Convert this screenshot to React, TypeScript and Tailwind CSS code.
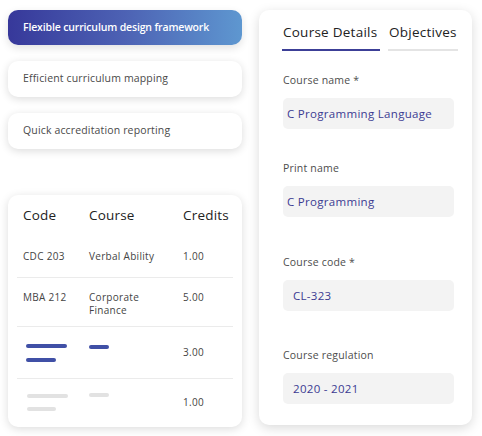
const font = { fontFamily: '"Open Sans", "Noto Sans", sans-serif' };

const SideCard = ({ label, active }: { label: string; active?: boolean }) => (
  <div
    className={
      active
        ? 'flex h-[35px] items-center rounded-[10px] bg-gradient-to-r from-[#37389a] via-[#4d62b4] to-[#5e97d0] pl-[15px] text-[10.5px] font-semibold tracking-[-0.15px] text-white shadow-[0_3px_8px_rgba(0,0,0,0.12)]'
        : 'flex h-[36px] items-center rounded-[10px] bg-white pl-[15px] text-[10.5px] tracking-[0.15px] text-[#4a4a4a] shadow-[0_2px_8px_rgba(0,0,0,0.14)]'
    }
  >
    {label}
  </div>
);

const Field = ({ label, value, indent, gap }: { label: string; value: string; indent?: boolean; gap: string }) => (
  <div className="flex flex-col">
    <div className={`text-[10.5px] leading-[12px] tracking-[0.2px] text-[#4d4d4d] ${gap}`}>{label}</div>
    <div
      className={`mt-[12px] flex h-[31px] w-[171px] items-center rounded-[5px] bg-[#f3f3f3] text-[11.5px] tracking-[0.3px] text-[#3b3b92] ${
        indent ? 'pl-[10px]' : 'pl-[4px]'
      }`}
    >
      {value}
    </div>
  </div>
);

export default function App() {
  return (
    <div className="flex h-[436px] w-[482px] overflow-hidden bg-white" style={font}>
      <div className="ml-[8px] flex w-[234px] flex-col pt-[10px]">
        <SideCard label="Flexible curriculum design framework" active />
        <div className="mt-[16px]">
          <SideCard label="Efficient curriculum mapping" />
        </div>
        <div className="mt-[16px]">
          <SideCard label="Quick accreditation reporting" />
        </div>

        <div className="mt-[46px] h-[232px] rounded-[10px] bg-white shadow-[0_2px_10px_rgba(0,0,0,0.14)]">
          <div className="grid h-[41px] grid-cols-[66px_94px_1fr] items-center px-[15px] text-[13.5px] tracking-[0.2px] text-[#222]">
            <span>Code</span>
            <span>Course</span>
            <span>Credits</span>
          </div>
          <div className="mx-[9px] text-[10px] tracking-[0.3px] text-[#444]">
            <div className="grid h-[42px] grid-cols-[66px_94px_1fr] items-center border-b border-[#ebebeb] pl-[6px]">
              <span>CDC 203</span>
              <span>Verbal Ability</span>
              <span>1.00</span>
            </div>
            <div className="grid h-[49px] grid-cols-[66px_94px_1fr] items-start border-b border-[#ebebeb] pl-[6px] pt-[13px] leading-[12.5px]">
              <span className="leading-[12px]">MBA 212</span>
              <span>
                Corporate
                <br />
                Finance
              </span>
              <span className="leading-[12px]">5.00</span>
            </div>
            <div className="grid h-[52px] grid-cols-[66px_94px_1fr] items-center border-b border-[#ebebeb] pl-[6px]">
              <div className="flex flex-col gap-[10px] pl-[3px]">
                <div className="h-[4px] w-[41px] rounded-full bg-[#4050a6]" />
                <div className="h-[4px] w-[30px] rounded-full bg-[#4050a6]" />
              </div>
              <div className="self-start pt-[18px]">
                <div className="h-[4px] w-[20px] rounded-full bg-[#4050a6]" />
              </div>
              <span>3.00</span>
            </div>
            <div className="grid h-[46px] grid-cols-[66px_94px_1fr] items-center pl-[6px]">
              <div className="flex flex-col gap-[9px] pl-[4px]">
                <div className="h-[4px] w-[41px] rounded-full bg-[#e2e2e2]" />
                <div className="h-[4px] w-[29px] rounded-full bg-[#e2e2e2]" />
              </div>
              <div className="self-start pt-[14px]">
                <div className="h-[4px] w-[20px] rounded-full bg-[#e2e2e2]" />
              </div>
              <span>1.00</span>
            </div>
          </div>
        </div>
      </div>

      <div className="ml-[17px] mt-[10px] flex h-[415px] w-[213px] flex-col rounded-[10px] bg-white pl-[23px] shadow-[0_3px_12px_rgba(0,0,0,0.15)]">
        <div className="mt-[13px] flex gap-[8px] text-[13.5px] tracking-[0.25px] text-[#222]">
          <div className="flex w-[98px] flex-col">
            <span className="pl-[1px] leading-[18px]">Course Details</span>
            <div className="mt-[8px] h-[2px] w-full bg-[#3c3f97]" />
          </div>
          <div className="flex w-[70px] flex-col">
            <span className="pl-[1px] leading-[18px]">Objectives</span>
            <div className="mt-[8px] h-[2px] w-full bg-[#e4e4e4]" />
          </div>
        </div>
        <div className="pl-[1px]">
          <Field label="Course name *" value="C Programming Language" gap="mt-[23px]" />
          <Field label="Print name" value="C Programming" gap="mt-[33px]" />
          <Field label="Course code *" value="CL-323" indent gap="mt-[39px]" />
          <Field label="Course regulation" value="2020 - 2021" indent gap="mt-[38px]" />
        </div>
      </div>
    </div>
  );
}
